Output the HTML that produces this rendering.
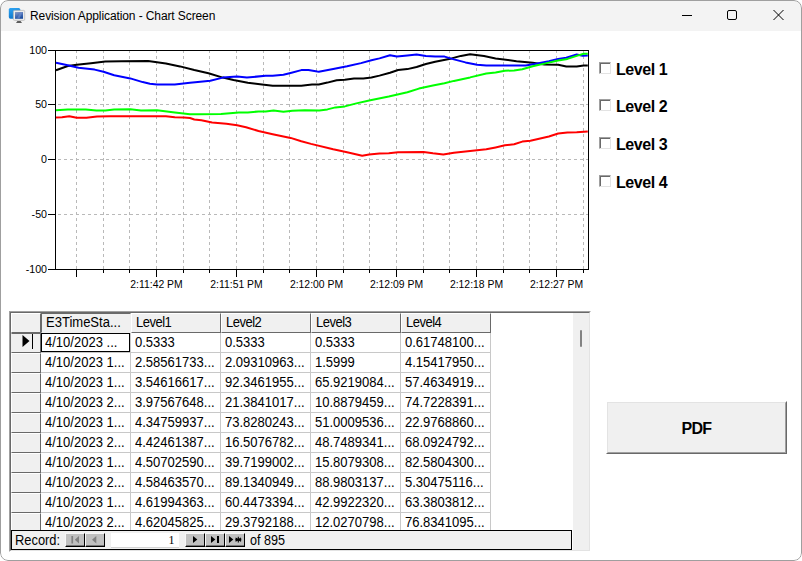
<!DOCTYPE html>
<html><head><meta charset="utf-8"><title>Revision Application - Chart Screen</title>
<style>
html,body{margin:0;padding:0;background:#fff;}
body{width:802px;height:561px;position:relative;overflow:hidden;font-family:"Liberation Sans",sans-serif;}
.win{position:absolute;left:0;top:0;width:802px;height:561px;border-radius:8px;background:#fff;overflow:hidden;}
.frame{position:absolute;left:0;top:0;width:800px;height:559px;border:1px solid #9f9f9f;border-radius:8px;pointer-events:none;}
.tbar{position:absolute;left:0;top:0;width:802px;height:31px;background:#f3f3f3;}
.title{position:absolute;left:30px;top:9px;font-size:12px;line-height:14px;color:#000;white-space:nowrap;letter-spacing:-0.1px;}
.ax{font-family:"Liberation Sans",sans-serif;font-size:10.67px;fill:#000;}
.cb{position:absolute;left:599px;width:12px;height:12px;box-sizing:border-box;background:#fff;border-top:1px solid #a0a0a0;border-left:1px solid #a0a0a0;border-right:1px solid #e3e3e3;border-bottom:1px solid #e3e3e3;}
.cb:before{content:"";position:absolute;left:0;top:0;width:9px;height:9px;border-top:1px solid #696969;border-left:1px solid #696969;}
.lbl{position:absolute;left:616px;font-size:16px;font-weight:bold;line-height:18px;color:#000;white-space:nowrap;letter-spacing:-0.45px;}
.pdf{position:absolute;left:606px;top:401px;width:181px;height:53px;box-sizing:border-box;background:#f0f0f0;border-top:1px solid #fff;border-left:1px solid #fff;border-right:1px solid #696969;border-bottom:1px solid #696969;}
.pdf:before{content:"";position:absolute;left:0;top:0;right:0;bottom:0;border-right:1px solid #a0a0a0;border-bottom:1px solid #a0a0a0;border-top:1px solid #e3e3e3;border-left:1px solid #e3e3e3;}
.pdf span{position:absolute;left:0;right:0;top:17px;text-align:center;font-weight:bold;font-size:16px;line-height:20px;letter-spacing:-0.7px;}
.gridwrap{position:absolute;left:9px;top:311px;width:582px;height:241px;box-sizing:border-box;border-top:1px solid #a0a0a0;border-left:1px solid #a0a0a0;border-right:1px solid #fff;border-bottom:1px solid #fff;background:#fff;}
.gridwrap:before{content:"";position:absolute;left:0;top:0;right:0;bottom:0;border-top:1px solid #696969;border-left:1px solid #696969;border-right:1px solid #e3e3e3;border-bottom:1px solid #e3e3e3;pointer-events:none;z-index:3;}
.tx{display:inline-block;transform:scaleX(0.93);transform-origin:0 50%;}
.hc:not(.first) .tx{letter-spacing:-0.55px;}
.grid{position:absolute;left:1px;top:1px;font-size:14px;color:#000;height:217px;overflow:hidden;}
.hrow,.row{display:flex;height:20px;}
.rh{position:relative;width:30px;height:20px;box-sizing:border-box;background:#f0f0f0;border-top:1px solid #fff;border-left:1px solid #fff;border-right:1px solid #696969;border-bottom:1px solid #696969;}
.rh.cur{border-top:1px solid #696969;border-left:1px solid #f0f0f0;}
.hc{width:90px;height:20px;box-sizing:border-box;background:#f0f0f0;border-top:1px solid #fff;border-left:1px solid #fff;border-right:1px solid #696969;border-bottom:1px solid #696969;padding-left:4px;line-height:17px;white-space:nowrap;overflow:hidden;}
.hc.first{border-top:1px solid #696969;border-left:1px solid #696969;border-right:1px solid #f0f0f0;border-bottom:1px solid #f0f0f0;}
.c{position:relative;width:90px;height:20px;box-sizing:border-box;background:#fff;border-right:1px solid #c8c8c8;border-bottom:1px solid #c8c8c8;padding-left:4px;line-height:19px;white-space:nowrap;overflow:hidden;}
.sel{position:absolute;left:0;top:0;width:87px;height:17px;border:1px solid #000;}
.vsb{position:absolute;left:573px;top:313px;width:16px;height:237px;background:#f0f0f0;}
.vsb i{position:absolute;left:7px;top:17px;width:2px;height:17px;background:#838383;border-radius:1px;}
.nav{position:absolute;left:11px;top:530px;width:561px;height:20px;box-sizing:border-box;border:1px solid #000;background:#f0f0f0;font-size:14px;}
.nav .t{position:absolute;top:2px;line-height:15px;white-space:nowrap;}
.nb{position:absolute;top:2px;width:20px;height:14px;box-sizing:border-box;background:#c0c0c0;border-top:1px solid #f6f6f6;border-left:1px solid #f6f6f6;border-right:1px solid #000;border-bottom:1px solid #000;box-shadow:inset 0 -1px 0 #777;}
.nb svg{position:absolute;left:0;top:0;}
.nf{position:absolute;left:99px;top:2px;width:68px;height:14px;background:#fff;border-bottom:1px solid #d4d4d4;}
.nf span{position:absolute;right:4.5px;top:1px;font-family:"Liberation Serif",serif;font-size:12px;line-height:13px;}
</style></head><body>
<div class="win">
<div class="tbar"></div>
<svg style="position:absolute;left:8px;top:7px" width="18" height="17" viewBox="8 7 18 17">
<defs><linearGradient id="g1" x1="0" y1="0" x2="0.3" y2="1"><stop offset="0" stop-color="#2fa6f5"/><stop offset="1" stop-color="#0e78cc"/></linearGradient>
<linearGradient id="g2" x1="0" y1="0" x2="0.4" y2="1"><stop offset="0" stop-color="#8f9fc4"/><stop offset="0.55" stop-color="#4d72b8"/><stop offset="1" stop-color="#1f4f9f"/></linearGradient></defs>
<rect x="8.8" y="8" width="11.5" height="10.7" rx="1.6" fill="url(#g1)"/>
<rect x="13.4" y="10.4" width="11.3" height="10" rx="1" fill="#ececec" stroke="#b5b5b5" stroke-width="0.7"/>
<rect x="15" y="12" width="8" height="6.8" fill="url(#g2)"/>
<path d="M20.5 12.3 L22.3 12.3 L19.5 18.5 L17 18.5 Z" fill="#6f8fd0" opacity="0.6"/>
<path d="M16 22.7 L22 22.7 L20.6 21.2 L17.4 21.2 Z" fill="#2a2a2a"/>
</svg>
<div class="title">Revision Application - Chart Screen</div>
<svg style="position:absolute;left:671px;top:1px" width="130" height="30" viewBox="0 0 130 30" fill="none" stroke="#000" stroke-width="1">
<line x1="11" y1="14.5" x2="21" y2="14.5"/>
<rect x="56.5" y="9.5" width="9" height="9" rx="1.5"/>
<path d="M102.5 9 L112.5 19 M112.5 9 L102.5 19"/>
</svg>
<svg class="chart" width="802" height="300" style="position:absolute;left:0;top:0">
<line x1="76.5" y1="51" x2="76.5" y2="269" stroke="#b9b9b9" stroke-width="1" stroke-dasharray="3 3" stroke-dashoffset="1"/>
<line x1="103.5" y1="51" x2="103.5" y2="269" stroke="#b9b9b9" stroke-width="1" stroke-dasharray="3 3" stroke-dashoffset="1"/>
<line x1="129.5" y1="51" x2="129.5" y2="269" stroke="#b9b9b9" stroke-width="1" stroke-dasharray="3 3" stroke-dashoffset="1"/>
<line x1="156.5" y1="51" x2="156.5" y2="269" stroke="#b9b9b9" stroke-width="1" stroke-dasharray="3 3" stroke-dashoffset="1"/>
<line x1="183.5" y1="51" x2="183.5" y2="269" stroke="#b9b9b9" stroke-width="1" stroke-dasharray="3 3" stroke-dashoffset="1"/>
<line x1="209.5" y1="51" x2="209.5" y2="269" stroke="#b9b9b9" stroke-width="1" stroke-dasharray="3 3" stroke-dashoffset="1"/>
<line x1="236.5" y1="51" x2="236.5" y2="269" stroke="#b9b9b9" stroke-width="1" stroke-dasharray="3 3" stroke-dashoffset="1"/>
<line x1="263.5" y1="51" x2="263.5" y2="269" stroke="#b9b9b9" stroke-width="1" stroke-dasharray="3 3" stroke-dashoffset="1"/>
<line x1="289.5" y1="51" x2="289.5" y2="269" stroke="#b9b9b9" stroke-width="1" stroke-dasharray="3 3" stroke-dashoffset="1"/>
<line x1="316.5" y1="51" x2="316.5" y2="269" stroke="#b9b9b9" stroke-width="1" stroke-dasharray="3 3" stroke-dashoffset="1"/>
<line x1="343.5" y1="51" x2="343.5" y2="269" stroke="#b9b9b9" stroke-width="1" stroke-dasharray="3 3" stroke-dashoffset="1"/>
<line x1="369.5" y1="51" x2="369.5" y2="269" stroke="#b9b9b9" stroke-width="1" stroke-dasharray="3 3" stroke-dashoffset="1"/>
<line x1="396.5" y1="51" x2="396.5" y2="269" stroke="#b9b9b9" stroke-width="1" stroke-dasharray="3 3" stroke-dashoffset="1"/>
<line x1="423.5" y1="51" x2="423.5" y2="269" stroke="#b9b9b9" stroke-width="1" stroke-dasharray="3 3" stroke-dashoffset="1"/>
<line x1="449.5" y1="51" x2="449.5" y2="269" stroke="#b9b9b9" stroke-width="1" stroke-dasharray="3 3" stroke-dashoffset="1"/>
<line x1="476.5" y1="51" x2="476.5" y2="269" stroke="#b9b9b9" stroke-width="1" stroke-dasharray="3 3" stroke-dashoffset="1"/>
<line x1="503.5" y1="51" x2="503.5" y2="269" stroke="#b9b9b9" stroke-width="1" stroke-dasharray="3 3" stroke-dashoffset="1"/>
<line x1="529.5" y1="51" x2="529.5" y2="269" stroke="#b9b9b9" stroke-width="1" stroke-dasharray="3 3" stroke-dashoffset="1"/>
<line x1="556.5" y1="51" x2="556.5" y2="269" stroke="#b9b9b9" stroke-width="1" stroke-dasharray="3 3" stroke-dashoffset="1"/>
<line x1="583.5" y1="51" x2="583.5" y2="269" stroke="#b9b9b9" stroke-width="1" stroke-dasharray="3 3" stroke-dashoffset="1"/>
<line x1="56" y1="104.5" x2="588" y2="104.5" stroke="#b9b9b9" stroke-width="1" stroke-dasharray="3 3" stroke-dashoffset="4"/>
<line x1="56" y1="159.5" x2="588" y2="159.5" stroke="#b9b9b9" stroke-width="1" stroke-dasharray="3 3" stroke-dashoffset="4"/>
<line x1="56" y1="214.5" x2="588" y2="214.5" stroke="#b9b9b9" stroke-width="1" stroke-dasharray="3 3" stroke-dashoffset="4"/>
<polyline points="56.0,70.3 67.8,66.0 76.8,64.7 91.0,63.2 105.3,61.5 121.3,61.2 148.1,61.1 165.9,63.4 180.0,66.4 194.3,70.0 208.5,73.2 222.8,77.6 233.5,80.0 247.8,82.8 262.0,84.6 272.7,85.8 301.3,85.8 312.0,84.6 318.8,84.4 327.4,82.6 336.7,80.2 344.8,79.8 354.0,78.6 363.3,78.6 371.4,77.5 379.5,75.6 390.0,72.8 398.1,70.0 407.4,69.1 416.6,67.0 425.9,64.0 435.2,61.7 451.6,58.4 460.9,55.9 470.1,54.3 484.0,56.1 495.6,58.4 516.5,61.2 532.7,62.8 544.3,64.5 558.2,64.7 566.3,66.5 576.7,66.5 583.7,65.6 587.8,65.5" fill="none" stroke="#000000" stroke-width="2" stroke-linejoin="round" stroke-linecap="butt"/>
<polyline points="56.0,62.8 67.8,65.2 78.5,67.8 94.6,69.6 103.5,71.8 114.2,75.3 130.3,78.4 142.7,82.1 149.9,83.7 157.0,84.6 174.8,84.6 190.0,82.8 197.8,81.9 210.3,80.7 222.8,77.6 237.1,76.6 246.9,77.6 265.6,75.7 272.7,75.7 283.4,74.8 290.6,73.0 301.3,70.1 308.4,70.1 317.3,71.6 318.8,71.7 333.2,69.1 347.1,66.3 361.0,63.1 371.4,60.3 379.5,58.4 390.0,55.2 396.9,56.6 407.4,55.4 416.6,54.5 425.9,55.9 435.2,56.6 444.6,56.6 453.9,59.4 465.5,62.4 477.1,64.7 486.3,65.6 525.7,65.4 537.3,63.5 548.9,61.2 558.2,58.9 566.3,57.7 576.7,54.5 582.5,55.7 587.8,55.4" fill="none" stroke="#0000ff" stroke-width="2" stroke-linejoin="round" stroke-linecap="butt"/>
<polyline points="56.0,110.3 67.8,109.4 85.7,109.4 96.4,110.6 105.3,110.6 114.2,109.6 130.3,109.2 141.0,110.5 157.0,110.3 174.8,112.4 190.0,114.2 197.8,114.2 221.0,114.0 238.9,112.6 247.8,112.4 258.5,111.5 265.6,111.5 273.6,110.5 283.4,111.7 292.4,110.8 304.8,110.3 319.3,110.6 327.4,109.4 335.5,107.4 344.8,106.4 356.4,103.4 370.3,100.2 388.8,96.5 407.4,92.3 418.9,88.6 432.9,85.6 444.4,83.2 453.9,80.9 470.1,77.4 486.3,73.5 495.6,72.6 504.9,70.7 514.1,70.5 522.3,69.3 532.7,66.3 546.6,63.1 558.2,60.5 567.4,58.9 576.7,55.9 583.7,53.8 587.8,53.8" fill="none" stroke="#00ff00" stroke-width="2" stroke-linejoin="round" stroke-linecap="butt"/>
<polyline points="56.0,117.6 62.0,117.3 69.3,116.3 76.7,117.8 86.4,117.7 97.0,116.4 110.0,116.2 165.9,116.2 174.8,117.2 183.8,117.4 190.0,118.0 194.3,119.5 201.4,120.3 212.1,122.6 226.4,123.8 237.1,125.3 246.0,127.2 258.5,131.0 272.7,134.2 290.6,137.9 301.3,141.3 311.0,143.9 333.2,149.3 347.1,152.3 362.2,155.8 369.1,154.6 379.5,153.5 388.8,153.3 398.1,152.3 423.6,152.1 432.9,153.3 443.3,154.4 453.9,152.7 470.1,151.1 486.3,149.3 495.6,147.4 504.9,145.3 514.1,144.2 522.3,141.6 530.4,140.7 548.9,136.5 558.2,133.5 567.4,132.6 576.7,132.3 587.8,131.4" fill="none" stroke="#ff0000" stroke-width="2" stroke-linejoin="round" stroke-linecap="butt"/>
<rect x="55.5" y="50.5" width="533.0" height="219.0" fill="none" stroke="#000" stroke-width="1"/>
<line x1="48" y1="50.5" x2="56" y2="50.5" stroke="#000" stroke-width="1"/>
<line x1="48" y1="104.5" x2="56" y2="104.5" stroke="#000" stroke-width="1"/>
<line x1="48" y1="159.5" x2="56" y2="159.5" stroke="#000" stroke-width="1"/>
<line x1="48" y1="214.5" x2="56" y2="214.5" stroke="#000" stroke-width="1"/>
<line x1="48" y1="269.5" x2="56" y2="269.5" stroke="#000" stroke-width="1"/>
<line x1="76.5" y1="269" x2="76.5" y2="277" stroke="#000" stroke-width="1"/>
<line x1="103.5" y1="269" x2="103.5" y2="273" stroke="#000" stroke-width="1"/>
<line x1="129.5" y1="269" x2="129.5" y2="273" stroke="#000" stroke-width="1"/>
<line x1="156.5" y1="269" x2="156.5" y2="277" stroke="#000" stroke-width="1"/>
<line x1="183.5" y1="269" x2="183.5" y2="273" stroke="#000" stroke-width="1"/>
<line x1="209.5" y1="269" x2="209.5" y2="273" stroke="#000" stroke-width="1"/>
<line x1="236.5" y1="269" x2="236.5" y2="277" stroke="#000" stroke-width="1"/>
<line x1="263.5" y1="269" x2="263.5" y2="273" stroke="#000" stroke-width="1"/>
<line x1="289.5" y1="269" x2="289.5" y2="273" stroke="#000" stroke-width="1"/>
<line x1="316.5" y1="269" x2="316.5" y2="277" stroke="#000" stroke-width="1"/>
<line x1="343.5" y1="269" x2="343.5" y2="273" stroke="#000" stroke-width="1"/>
<line x1="369.5" y1="269" x2="369.5" y2="273" stroke="#000" stroke-width="1"/>
<line x1="396.5" y1="269" x2="396.5" y2="277" stroke="#000" stroke-width="1"/>
<line x1="423.5" y1="269" x2="423.5" y2="273" stroke="#000" stroke-width="1"/>
<line x1="449.5" y1="269" x2="449.5" y2="273" stroke="#000" stroke-width="1"/>
<line x1="476.5" y1="269" x2="476.5" y2="277" stroke="#000" stroke-width="1"/>
<line x1="503.5" y1="269" x2="503.5" y2="273" stroke="#000" stroke-width="1"/>
<line x1="529.5" y1="269" x2="529.5" y2="273" stroke="#000" stroke-width="1"/>
<line x1="556.5" y1="269" x2="556.5" y2="277" stroke="#000" stroke-width="1"/>
<line x1="583.5" y1="269" x2="583.5" y2="273" stroke="#000" stroke-width="1"/>
<text x="47" y="54" text-anchor="end" class="ax">100</text>
<text x="47" y="108" text-anchor="end" class="ax">50</text>
<text x="47" y="163" text-anchor="end" class="ax">0</text>
<text x="47" y="218" text-anchor="end" class="ax">-50</text>
<text x="47" y="273" text-anchor="end" class="ax">-100</text>
<text x="156.5" y="288" text-anchor="middle" class="ax" style="font-size:10.4px">2:11:42 PM</text>
<text x="236.5" y="288" text-anchor="middle" class="ax" style="font-size:10.4px">2:11:51 PM</text>
<text x="316.5" y="288" text-anchor="middle" class="ax" style="font-size:10.4px">2:12:00 PM</text>
<text x="396.5" y="288" text-anchor="middle" class="ax" style="font-size:10.4px">2:12:09 PM</text>
<text x="476.5" y="288" text-anchor="middle" class="ax" style="font-size:10.4px">2:12:18 PM</text>
<text x="556.5" y="288" text-anchor="middle" class="ax" style="font-size:10.4px">2:12:27 PM</text>
</svg>
<div class="cb" style="top:62px"></div><div class="lbl" style="top:61px">Level 1</div>
<div class="cb" style="top:99px"></div><div class="lbl" style="top:98px">Level 2</div>
<div class="cb" style="top:137px"></div><div class="lbl" style="top:136px">Level 3</div>
<div class="cb" style="top:175px"></div><div class="lbl" style="top:174px">Level 4</div>
<div class="gridwrap">
<div class="grid">
<div class="hrow"><div class="rh corner"></div><div class="hc first"><span class="tx">E3TimeSta...</span></div><div class="hc"><span class="tx">Level1</span></div><div class="hc"><span class="tx">Level2</span></div><div class="hc"><span class="tx">Level3</span></div><div class="hc"><span class="tx">Level4</span></div></div>
<div class="row"><div class="rh cur"><svg width="14" height="16" viewBox="0 0 14 16" style="position:absolute;left:9px;top:0px"><path d="M1.5 1 L8.5 7 L1.5 13 Z" fill="#000"/><rect x="11" y="0" width="1" height="15" fill="#000"/></svg></div><div class="c"><span class=sel></span><span class="tx">4/10/2023 ...</span></div><div class="c"><span class="tx">0.5333</span></div><div class="c"><span class="tx">0.5333</span></div><div class="c"><span class="tx">0.5333</span></div><div class="c"><span class="tx">0.61748100...</span></div></div>
<div class="row"><div class="rh"></div><div class="c"><span class="tx">4/10/2023 1...</span></div><div class="c"><span class="tx">2.58561733...</span></div><div class="c"><span class="tx">2.09310963...</span></div><div class="c"><span class="tx">1.5999</span></div><div class="c"><span class="tx">4.15417950...</span></div></div>
<div class="row"><div class="rh"></div><div class="c"><span class="tx">4/10/2023 1...</span></div><div class="c"><span class="tx">3.54616617...</span></div><div class="c"><span class="tx">92.3461955...</span></div><div class="c"><span class="tx">65.9219084...</span></div><div class="c"><span class="tx">57.4634919...</span></div></div>
<div class="row"><div class="rh"></div><div class="c"><span class="tx">4/10/2023 2...</span></div><div class="c"><span class="tx">3.97567648...</span></div><div class="c"><span class="tx">21.3841017...</span></div><div class="c"><span class="tx">10.8879459...</span></div><div class="c"><span class="tx">74.7228391...</span></div></div>
<div class="row"><div class="rh"></div><div class="c"><span class="tx">4/10/2023 1...</span></div><div class="c"><span class="tx">4.34759937...</span></div><div class="c"><span class="tx">73.8280243...</span></div><div class="c"><span class="tx">51.0009536...</span></div><div class="c"><span class="tx">22.9768860...</span></div></div>
<div class="row"><div class="rh"></div><div class="c"><span class="tx">4/10/2023 2...</span></div><div class="c"><span class="tx">4.42461387...</span></div><div class="c"><span class="tx">16.5076782...</span></div><div class="c"><span class="tx">48.7489341...</span></div><div class="c"><span class="tx">68.0924792...</span></div></div>
<div class="row"><div class="rh"></div><div class="c"><span class="tx">4/10/2023 1...</span></div><div class="c"><span class="tx">4.50702590...</span></div><div class="c"><span class="tx">39.7199002...</span></div><div class="c"><span class="tx">15.8079308...</span></div><div class="c"><span class="tx">82.5804300...</span></div></div>
<div class="row"><div class="rh"></div><div class="c"><span class="tx">4/10/2023 2...</span></div><div class="c"><span class="tx">4.58463570...</span></div><div class="c"><span class="tx">89.1340949...</span></div><div class="c"><span class="tx">88.9803137...</span></div><div class="c"><span class="tx">5.30475116...</span></div></div>
<div class="row"><div class="rh"></div><div class="c"><span class="tx">4/10/2023 1...</span></div><div class="c"><span class="tx">4.61994363...</span></div><div class="c"><span class="tx">60.4473394...</span></div><div class="c"><span class="tx">42.9922320...</span></div><div class="c"><span class="tx">63.3803812...</span></div></div>
<div class="row"><div class="rh"></div><div class="c"><span class="tx">4/10/2023 2...</span></div><div class="c"><span class="tx">4.62045825...</span></div><div class="c"><span class="tx">29.3792188...</span></div><div class="c"><span class="tx">12.0270798...</span></div><div class="c"><span class="tx">76.8341095...</span></div></div>
</div>
</div>
<div class="vsb"><i></i></div>
<div class="nav"><span class="t tx" style="left:3px;transform:scaleX(0.92)">Record:</span>
<div class="nb" style="left:53px"><svg width="18" height="12"><path d="M13 2 L13 9.5 L8.8 5.75 Z" fill="#808080"/><rect x="5.4" y="2" width="1.7" height="7.5" fill="#808080"/></svg></div>
<div class="nb" style="left:73px"><svg width="18" height="12"><path d="M10.3 2 L10.3 9.5 L6 5.75 Z" fill="#808080"/></svg></div>
<div class="nf"><span>1</span></div>
<div class="nb" style="left:173px"><svg width="18" height="12"><path d="M7 2 L7 9 L11.3 5.5 Z" fill="#000"/></svg></div>
<div class="nb" style="left:193px"><svg width="18" height="12"><path d="M5 2 L5 9 L9.3 5.5 Z" fill="#000"/><rect x="11" y="2" width="2" height="7" fill="#000"/></svg></div>
<div class="nb" style="left:213px"><svg width="18" height="12"><path d="M3 2 L3 9 L7.3 5.5 Z" fill="#000"/><path d="M12.3 2.7 V8.5 M9.5 4 L15.1 7.2 M15.1 4 L9.5 7.2 M9.3 5.6 H15.3" stroke="#000" stroke-width="1.1"/></svg></div>
<span class="t tx" style="left:238px;transform:scaleX(0.9)">of 895</span>
</div>
<div class="pdf"><span>PDF</span></div>
<div class="frame"></div>
</div>
</body></html>
